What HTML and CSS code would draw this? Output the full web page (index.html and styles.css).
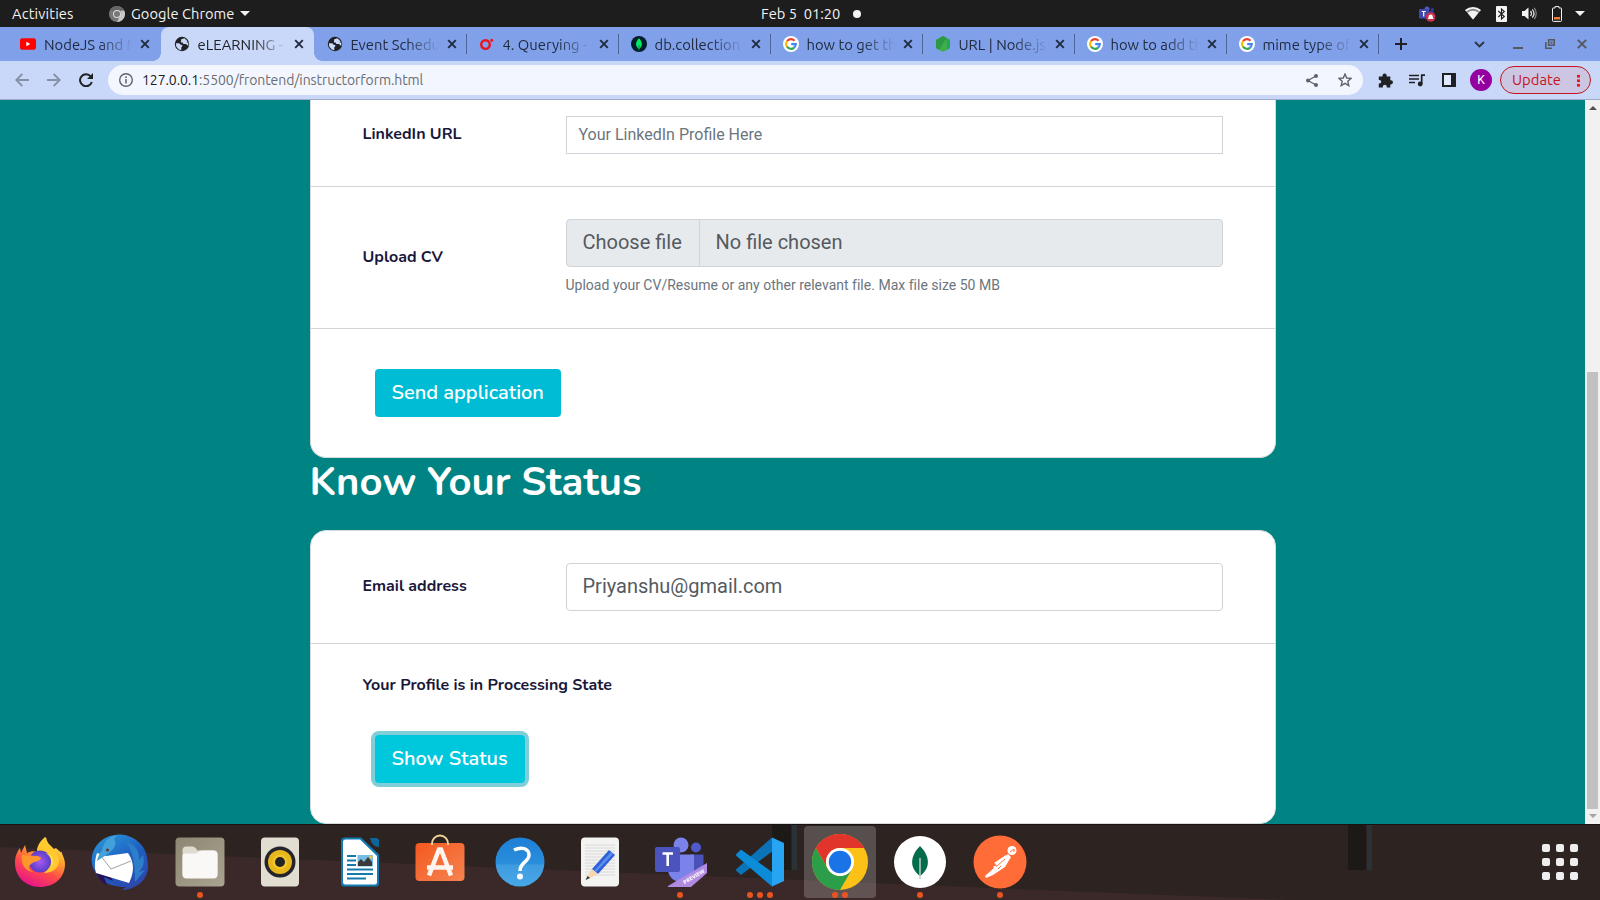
FILE: index.html
```html
<!DOCTYPE html>
<html lang="en">
<head>
<meta charset="utf-8">
<title>eLEARNING</title>
<link rel="stylesheet" href="styles.css">
</head>
<body>
<svg width="0" height="0" class="defs" aria-hidden="true">
  <defs>
    <symbol id="close" viewBox="0 0 10 10"><path d="M1.2 1.2l7.6 7.6M8.8 1.2L1.2 8.8" fill="none" stroke="currentColor" stroke-width="1.9"/></symbol>
    <symbol id="globe" viewBox="0 0 16 16"><circle cx="8" cy="8" r="7.2" fill="#202124"/><path d="M2 7.2h3.2l1.5 1.6 1.6.3v1.2l-1 1v2.9a6 6 0 0 1-5.3-7zM7.2 3.2l3.3-1 3 3.1-1 1.2h1.8v3.4l-2.3-1.8H9.4L8.6 6.6H6.9z" fill="#c9d7f8"/></symbol>
    <symbol id="google" viewBox="0 0 16 16"><circle cx="8" cy="8" r="8" fill="#fff"/><g fill="none" stroke-width="2.1"><path d="M4 5.2A4.8 4.8 0 0 1 11.5 4.7" stroke="#ea4335"/><path d="M4.1 5.1a4.8 4.8 0 0 0 0 5.8" stroke="#fbbc05"/><path d="M4 10.7a4.8 4.8 0 0 0 7.2.9" stroke="#34a853"/><path d="M8.2 8.1h4.6a4.7 4.7 0 0 1-1.6 3.5" stroke="#4285f4"/></g></symbol>
    <linearGradient id="ff" x1=".8" y1="0" x2=".3" y2="1"><stop offset="0" stop-color="#fff44f"/><stop offset=".35" stop-color="#ffa52b"/><stop offset=".65" stop-color="#ff4a4a"/><stop offset="1" stop-color="#e5128e"/></linearGradient>
    <radialGradient id="ffc"><stop offset="0" stop-color="#a65bf2"/><stop offset="1" stop-color="#5a3cc8"/></radialGradient>
    <linearGradient id="tb" x1=".2" y1="0" x2=".8" y2="1"><stop offset="0" stop-color="#2a94d8"/><stop offset=".5" stop-color="#1d5dc0"/><stop offset="1" stop-color="#2f45a8"/></linearGradient>
    <linearGradient id="hp" x1="0" y1="0" x2="0" y2="1"><stop offset="0" stop-color="#1d7fd6"/><stop offset=".54" stop-color="#2b8edb"/><stop offset=".56" stop-color="#3f9be0"/><stop offset="1" stop-color="#46a8e6"/></linearGradient>
    <linearGradient id="sw" x1="0" y1="0" x2="1" y2="1"><stop offset="0" stop-color="#f4581f"/><stop offset="1" stop-color="#f58451"/></linearGradient>
    <linearGradient id="fl" x1="0" y1="0" x2="1" y2="1"><stop offset="0" stop-color="#8c8672"/><stop offset="1" stop-color="#aaa38f"/></linearGradient>
  </defs>
</svg>
<div class="screen">
  <header class="topbar">
    <span class="activities">Activities</span>
    <svg class="app-ico" width="16" height="16" viewBox="0 0 16 16"><circle cx="8" cy="8" r="8" fill="#777"/><path d="M8 0a8 8 0 0 1 7.2 4.5H8a3.6 3.6 0 0 0-3.3 2L1.3 3.7A8 8 0 0 1 8 0z" fill="#666"/><path d="M15.3 4.7A8 8 0 0 1 8 16l3.3-6.2a4 4 0 0 0 0-5z" fill="#c8c8c8"/><circle cx="8" cy="8" r="4" fill="#ddd"/><circle cx="8" cy="8" r="3" fill="#777"/></svg>
    <span class="app-name">Google Chrome</span>
    <i class="caret"></i>
    <div class="clock"><span class="date">Feb 5&nbsp; 01:20</span><i class="dot"></i></div>
    <div class="tray">
      <svg width="17" height="16" viewBox="0 0 17 16"><circle cx="8" cy="3" r="2.5" fill="#5059c9"/><circle cx="13.3" cy="3.8" r="1.7" fill="#343b8c"/><rect x="5" y="5" width="10" height="8" rx="2" fill="#343b8c"/><rect x="0" y="3" width="9.5" height="9.5" rx="1" fill="#4048b0"/><path d="M2.7 5.5h4M4.7 5.5v5" stroke="#fff" stroke-width="1.2"/><circle cx="11.7" cy="11" r="4.8" fill="#cc2f4b"/><path d="M8.7 13q.9-.8.9-2.400a2.100 2.100 0 0 1 4.200 0q0 1.600.9 2.400z" fill="#fff"/></svg>
      <svg class="t-wifi" width="16" height="13" viewBox="0 0 16 13"><path d="M.4 3.6A11.3 11.3 0 0 1 15.6 3.6L8 12.6z" fill="#8b8b8b"/><path d="M2.5 5.7a8.5 8.5 0 0 1 11 0L8 12.4z" fill="#f4f4f4"/><path d="M.6 3.7a11.2 11.2 0 0 1 14.8 0" fill="none" stroke="#f4f4f4" stroke-width="1.8"/></svg>
      <svg class="t-bt" width="11" height="16" viewBox="0 0 11 16"><rect width="11" height="16" rx="1" fill="#f4f4f4"/><path d="M2.3 5l6 5.5L5.500 13V3l2.800 2.500-6 5.500" fill="none" stroke="#1d1d1d" stroke-width="1.1"/></svg>
      <svg class="t-vol" width="15" height="13" viewBox="0 0 15 13"><path d="M0 4h2.500L6.500.4v12.200L2.500 9H0z" fill="#f4f4f4"/><path d="M8.500 4a4 4 0 0 1 0 5M10.300 2.400a6.500 6.500 0 0 1 0 8.200" fill="none" stroke="#ddd" stroke-width="1.3"/><path d="M12.200.8a9 9 0 0 1 0 11.400" fill="none" stroke="#888" stroke-width="1.2"/></svg>
      <svg class="t-bat" width="10" height="16" viewBox="0 0 10 16"><path d="M1 2h2V.6h4V2h2q.5 0 .5.5v12q0 .9-.8.9H1.300q-.8 0-.8-.8v-12Q.5 2 1 2z" fill="none" stroke="#f4f4f4"/><rect x="2" y="11" width="6" height="2.5" fill="#f27835"/></svg>
      <i class="caret"></i>
    </div>
  </header>

  <nav class="tabs">
    <div class="tab first"><svg class="fav" viewBox="0 0 16 16"><rect y="2.3" width="16" height="11.5" rx="2.2" fill="#f00"/><path d="M6.300 5.700v4.600L10.300 8z" fill="#fff"/></svg><span class="t">NodeJS and M</span><svg class="x"><use href="#close"/></svg></div>
    <div class="tab active"><svg class="fav"><use href="#globe"/></svg><span class="t">eLEARNING -</span><svg class="x"><use href="#close"/></svg></div>
    <div class="tab sep"><svg class="fav"><use href="#globe"/></svg><span class="t">Event Schedu</span><svg class="x"><use href="#close"/></svg></div>
    <div class="tab sep"><svg class="fav" viewBox="0 0 16 16"><circle cx="6.5" cy="8.6" r="4.3" fill="none" stroke="#e8141e" stroke-width="2.4"/><circle cx="12.7" cy="4.2" r="1.5" fill="#e8141e"/></svg><span class="t">4. Querying -</span><svg class="x"><use href="#close"/></svg></div>
    <div class="tab sep"><svg class="fav" viewBox="0 0 16 16"><circle cx="8" cy="8" r="8" fill="#001e2b"/><path d="M8 2.300c4 4 3.700 8 0 11-3.700-3-4-7 0-11z" fill="#00ed64"/><path d="M8 9v5.500" stroke="#09804c"/></svg><span class="t">db.collection</span><svg class="x"><use href="#close"/></svg></div>
    <div class="tab sep"><svg class="fav"><use href="#google"/></svg><span class="t">how to get th</span><svg class="x"><use href="#close"/></svg></div>
    <div class="tab sep"><svg class="fav" viewBox="0 0 16 16"><path d="M8 0l7 4v8l-7 4-7-4V4z" fill="#3fae49"/><path d="M8 0L1 4v8l3 1.700L11.500 2z" fill="#2c9a45"/><path d="M11.500 2L15 4v8l-3 1.700z" fill="#1fa954"/></svg><span class="t">URL | Node.js</span><svg class="x"><use href="#close"/></svg></div>
    <div class="tab sep"><svg class="fav"><use href="#google"/></svg><span class="t">how to add th</span><svg class="x"><use href="#close"/></svg></div>
    <div class="tab sep"><svg class="fav"><use href="#google"/></svg><span class="t">mime type of</span><svg class="x"><use href="#close"/></svg></div>
    <svg class="plus" width="12" height="12" viewBox="0 0 12 12"><path d="M6 0v12M0 6h12" stroke="#202124" stroke-width="2"/></svg>
    <div class="winctl">
      <svg width="11" height="7" viewBox="0 0 11 7"><path d="M1 1l4.500 4.500L10 1" fill="none" stroke="#303640" stroke-width="1.9"/></svg>
      <svg width="10" height="10" viewBox="0 0 10 10"><path d="M0 9h10" stroke="#55585f" stroke-width="2"/></svg>
      <svg width="10" height="10" viewBox="0 0 10 10"><path d="M3.700.8h5.500v5.500H3.700zM.8 3v6.200H7" fill="none" stroke="#55585f" stroke-width="1.6"/><rect x="5.5" y="2.6" width="2" height="2" fill="#55585f"/></svg>
      <svg width="10" height="10" viewBox="0 0 10 10"><path d="M.8.8l8.400 8.400M9.200.8L.8 9.200" stroke="#55585f" stroke-width="1.9"/></svg>
    </div>
  </nav>

  <div class="toolbar">
    <svg class="back" width="14" height="14" viewBox="0 0 14 14"><path d="M14 7H1.500M7.300 1L1.300 7l6 6" fill="none" stroke="#8590a8" stroke-width="1.8"/></svg>
    <svg class="fwd" width="14" height="14" viewBox="0 0 14 14"><path d="M0 7h12.500M6.700 1l6 6-6 6" fill="none" stroke="#8590a8" stroke-width="1.8"/></svg>
    <svg class="reload" width="14" height="14" viewBox="0 0 14 14"><path d="M11.800 3.500A6 6 0 1 0 12.800 9" fill="none" stroke="#202124" stroke-width="2"/><path d="M14 0v6H8z" fill="#202124"/></svg>
    <div class="omnibox">
      <svg width="14" height="14" viewBox="0 0 14 14"><circle cx="7" cy="7" r="6.3" fill="none" stroke="#5f6368" stroke-width="1.4"/><path d="M7 6v4.500M7 3.300v1.600" stroke="#5f6368" stroke-width="1.5"/></svg>
      <span class="url"><b>127.0.0.1</b>:5500/frontend/instructorform.html</span>
      <svg class="share" width="12" height="13" viewBox="0 0 12 13"><path d="M10 2L2 6.500l8 4.500" fill="none" stroke="#5f6368" stroke-width="1.3"/><circle cx="10" cy="2" r="2" fill="#5f6368"/><circle cx="2" cy="6.5" r="2" fill="#5f6368"/><circle cx="10" cy="11" r="2" fill="#5f6368"/></svg>
      <svg width="14" height="14" viewBox="0 0 14 14"><path d="M7 1l1.700 4 4.400.4-3.300 2.900 1 4.300L7 10.300l-3.800 2.300 1-4.300L.9 5.400 5.300 5z" fill="none" stroke="#5f6368" stroke-width="1.4"/></svg>
    </div>
    <svg class="ext" width="15" height="15" viewBox="0 0 15 15"><path d="M.8 3.500H4.500V2.600a2.100 2.100 0 0 1 4.200 0v.9h3.600v3.700h.6a2.100 2.100 0 0 1 0 4.200h-.6V14.500H8.800v-.7a2 2 0 0 0-4 0v.7H.8v-4h.7a1.700 1.700 0 0 0 0-3.500H.8z" fill="#202124"/></svg>
    <svg class="media" width="16" height="13" viewBox="0 0 16 13"><path d="M0 1.500h10M0 5h10M0 8.500h6M12.700 10V1.200H16" fill="none" stroke="#202124" stroke-width="1.7"/><circle cx="11.2" cy="10" r="2.4" fill="#202124"/></svg>
    <svg class="side" width="14" height="14" viewBox="0 0 14 14"><path d="M1 1h12v12H1z" fill="#dfe8fc" stroke="#202124" stroke-width="2"/><path d="M9 1h4v12H9z" fill="#202124"/></svg>
    <span class="avatar">K</span>
    <span class="update"><span class="ut">Update</span><i></i></span>
  </div>

  <main class="viewport">
    <div class="page">
      <section class="card card-top">
        <div class="row r-link"><label>LinkedIn URL</label><div class="field"><div class="input">Your LinkedIn Profile Here</div></div></div>
        <div class="row r-file"><label>Upload CV</label><div class="field"><div class="input lg file"><span class="choose">Choose file</span><span>No file chosen</span></div><div class="hint">Upload your CV/Resume or any other relevant file. Max file size 50 MB</div></div></div>
        <div class="r-send"><span class="btn send">Send application</span></div>
      </section>
      <h1>Know Your Status</h1>
      <section class="card card-status">
        <div class="row r-mail"><label>Email address</label><div class="field"><div class="input lg mail">Priyanshu@gmail.com</div></div></div>
        <div class="r-status"><p>Your Profile is in Processing State</p><span class="btn focus">Show Status</span></div>
      </section>
    </div>
    <div class="scroll"><i class="up"></i><div class="thumb"></div><i class="down"></i></div>
  </main>

  <footer class="dock">
    <svg class="wall" viewBox="0 0 1600 76" preserveAspectRatio="none"><rect width="1600" height="76" fill="#2d2321"/><path d="M0 23L1140 70 1290 76H0z" fill="#3b2929"/><path d="M772 0h19v46h-19zM1348 0h18v46h-18z" fill="#1c1917"/><path d="M792 0h5v46h-5zM1367 0h5v46h-5z" fill="#2b3134"/><path d="M0 .5h1600" stroke="#181313"/></svg>
    <div class="cell"><svg width="56" height="56" viewBox="0 0 56 56"><path d="M28 53C13 53 3 42 3 29c0-7 2-11 5-15l1 5 4-8 2 8c4-2 7-2 10-1 1-6 3-9 9-15 1 6 3 7 8 12l2-1c3 3 5 5 6 4-1 1 3 6 3 12 0 14-11 23-25 23z" fill="url(#ff)"/><path d="M33 3c-7 6-8 11-8 15 6 0 11 4 12 9 1 6-1 9-5 12 9 0 15-5 15-13 0-8-12-12-14-23z" fill="#ffc92f"/><circle cx="28" cy="27.5" r="11" fill="url(#ffc)"/><path d="M10 21l15 1c1 0 4 1 4 2-1 4-8 3-11 7-3 3 1 6 4 7-9 0-14-9-12-17z" fill="#ff962d"/><path d="M33 19c5 2 8 7 6 14 4-5 3-12-6-14z" fill="#ffde55"/></svg></div>
    <div class="cell"><svg width="58" height="58" viewBox="0 0 58 58"><path d="M22 3C31-1 45 4 52 14c4 6 5 14 5 21-1 10-8 17-14 19-3 2-8 3-12 3l4-3c-17 0-31-7-34-23C-1 18 8 4 24 2z" fill="url(#tb)"/><path d="M3 37c4 7 7 12 13 15l-3-8 9 4-8-15z" fill="#26105a"/><path d="M6 20l9 3L37 20c7 10 6 20 1 30L5 40c-2-6-1-14 1-20z" fill="#fff"/><path d="M9 22l11 14 20-8" fill="none" stroke="#888" stroke-width=".8"/><path d="M11 17C13 7 20 3 26 2l-3 4c5 8-4 14-17 22 1-5 3-8 5-11z" fill="#42a0da"/><path d="M35 9c9 2 14 9 13 18l4-5c2 8 0 13-4 17l6-2-10 12C44 31 42 18 35 9z" fill="#2e7dc9"/><circle cx="16.5" cy="17" r="1.6" fill="#593c35"/></svg></div>
    <div class="cell"><svg width="50" height="50" viewBox="0 0 50 50"><rect x=".5" y=".5" width="49" height="49" rx="4" fill="url(#fl)"/><path d="M7.500 13q0-3.500 4-3.500h6q2 0 3 1.500l2 2.500h16q4 0 4 4V37q0 4-4 4H11.500q-4 0-4-4z" fill="#dfdbd1"/><path d="M7.500 19q0-2.500 3-2.500h9q2 0 3.500-1.500t4-1.500h11.500q4 0 4 4v20q0 4-4 4h-27q-4 0-4-4z" fill="#f9f8f7"/></svg><i class="run"><b></b></i></div>
    <div class="cell"><svg width="40" height="50" viewBox="0 0 40 50"><rect x="1" y=".5" width="38" height="49" rx="4" fill="#e2ddd1"/><circle cx="20" cy="25" r="15.5" fill="#24242c"/><circle cx="20" cy="25" r="12" fill="#e7b61b"/><circle cx="20" cy="25" r="7.5" fill="#f2c62b"/><circle cx="20" cy="25" r="5" fill="#242424"/></svg></div>
    <div class="cell"><svg width="40" height="50" viewBox="0 0 40 50"><path d="M5 .5h16l18 17V46q0 3.500-3.500 3.500h-31Q1 49.500 1 46V4Q1 .5 5 .5z" fill="#137bb4"/><path d="M3 5q0-2.500 2.500-2.500H20L37 19v26q0 2.500-2.500 2.500h-29Q3 47.500 3 45z" fill="#fff"/><path d="M30 1h6q3 0 3 3v6q-7 0-9-9z" fill="#0c659c"/><path d="M7 19h9M7 23.500h9M7 28h9M7 32.500h26M7 37h26M7 41.500h19" stroke="#1679ad" stroke-width="2"/><rect x="17.5" y="18" width="15.5" height="11.5" fill="#75bde4"/><path d="M18 29v-4l3-3 3 3 4-5 4 5v4z" fill="#3a3a3a"/><circle cx="31" cy="20" r="1.5" fill="#f4c82e"/></svg></div>
    <div class="cell"><svg width="50" height="56" viewBox="0 0 50 56"><rect x=".5" y="9" width="49" height="38" rx="4" fill="url(#sw)"/><path d="M17 11V9.500a8 8 0 0 1 16 0V11" fill="none" stroke="#f2d29b" stroke-width="2"/><path d="M14 41.500l10-26h2l10 26M12 33.500h26" fill="none" stroke="#fff4ee" stroke-width="4.5"/></svg></div>
    <div class="cell"><svg width="50" height="50" viewBox="0 0 50 50"><circle cx="25" cy="25" r="24.5" fill="url(#hp)"/><path d="M19 13c7-3.500 15-2 15 5 0 7-9 7-9 16" fill="none" stroke="#fff" stroke-width="3.5"/><circle cx="25" cy="39.5" r="3" fill="#fff"/></svg></div>
    <div class="cell"><svg width="40" height="50" viewBox="0 0 40 50"><rect x="1" y=".5" width="38" height="49" rx="4" fill="#f3f3f2"/><path d="M5 8h30M5 11h30M5 14h30M5 17h30M5 20h30M5 23h30M5 26h30M5 29h30M5 32h30M5 35h30M5 38h30" stroke="#d8d8d8"/><path d="M29 13l6 5-17 19-6-5z" fill="#2f62d9"/><path d="M31 15l2 2-17 18-2-1z" fill="#5f8df0"/><path d="M11.500 32l6.500 5-12 6z" fill="#f6d6ad"/><path d="M7.500 39L10 41l-4.500 2z" fill="#333"/></svg></div>
    <div class="cell"><svg width="54" height="52" viewBox="0 0 54 52"><circle cx="28" cy="9" r="7.5" fill="#7b83eb"/><circle cx="43" cy="11.5" r="5" fill="#5059c9"/><path d="M38 18.500h12.500V34q-1 9-11 9z" fill="#4a52b8"/><path d="M15 18.500h26V32a13 13 0 0 1-26 2z" fill="#7b83eb"/><rect x="2" y="11" width="25" height="25" rx="2" fill="#4b53bc"/><path d="M9.500 17.500h10.500M14.700 17.500V30" stroke="#fff" stroke-width="2.6"/><path d="M15 50L54 27v10L38 51H15z" fill="#b18ae2"/><text x="31.500" y="48.500" transform="rotate(-31 31.500 48.500)" font-size="5.500" class="pv">PREVIEW</text></svg><i class="run"><b></b></i></div>
    <div class="cell"><svg width="50" height="50" viewBox="0 0 50 50"><path d="M6 38L1.500 34q-1-1 0-2L37 .5v14z" fill="#0b74b8"/><path d="M6 12.500L1.500 17q-1 1 0 2L37 49.500V35z" fill="#0c8bd8"/><path d="M37 .5l12 5.500V44L37 49.500z" fill="#27a4f2"/></svg><i class="run"><b></b><b></b><b></b></i></div>
    <div class="cell on"><svg width="56" height="56" viewBox="0 0 56 56"><circle cx="28" cy="28" r="28" fill="#fbc116"/><path d="M3.750 14A28 28 0 0 1 52.300 14H28A14 14 0 0 0 15.900 35z" fill="#e1352b"/><path d="M3.750 14A28 28 0 0 0 28 56L40.100 35A14 14 0 0 1 15.900 35z" fill="#2c9d49"/><circle cx="28" cy="28" r="14" fill="#fff"/><circle cx="28" cy="28" r="11.2" fill="#1b73e8"/></svg><i class="run"><b></b><b></b></i></div>
    <div class="cell"><svg width="52" height="52" viewBox="0 0 52 52"><circle cx="26" cy="26" r="26" fill="#fff"/><path d="M26 10c10 10 11 22 0 30-11-8-10-20 0-30z" fill="#046b4c"/><path d="M26 22v21" stroke="#b8d0c3" stroke-width="1.5"/></svg><i class="run"><b></b></i></div>
    <div class="cell"><svg width="54" height="54" viewBox="0 0 54 54"><circle cx="27" cy="27" r="26.5" fill="#ff6c37"/><circle cx="39" cy="15.5" r="4.5" fill="#fff"/><path d="M35 19l3 3-6 10-12 8-7 3-1-2 9-8-1-1z" fill="#fff"/><path d="M21 28l12-8 2 2-10 8z" fill="#fff"/><path d="M20 30l4 1 8-7M37 17l4-3v3M25 34l3-3" fill="none" stroke="#ff6c37"/></svg><i class="run"><b></b></i></div>
    <div class="apps"><i></i><i></i><i></i><i></i><i></i><i></i><i></i><i></i><i></i></div>
  </footer>
</div>
</body>
</html>
```
FILE: styles.css
```css
* { box-sizing: border-box; }
body { margin: 0; font-family: Ubuntu, "Noto Sans", sans-serif; }
svg { display: block; flex: none; }
.defs { position: absolute; }
.screen { width: 1600px; height: 900px; display: flex; flex-direction: column; overflow: hidden; }

/* desktop bar */
.topbar { position: relative; height: 27px; flex: none; background: #1d1d1d; color: #f2f2f2; display: flex; align-items: center; font-size: 14.667px; white-space: nowrap; }
.activities { margin-left: 12px; width: 97px; letter-spacing: .15px; }
.app-name { margin-left: 6px; width: 104px; letter-spacing: .05px; }
.caret { border: 5px solid transparent; border-top-color: #f2f2f2; border-bottom: 0; margin-left: 5px; }
.clock { margin-left: 511px; display: flex; align-items: center; }
.date { width: 92px; }
.dot { width: 8px; height: 8px; border-radius: 50%; background: #f4f4f4; }
.tray { display: flex; align-items: center; margin-left: auto; padding-right: 15px; }
.t-wifi { margin-left: 29px; }
.t-bt { margin-left: 15px; }
.t-vol { margin-left: 15px; }
.t-bat { margin-left: 15px; }
.tray .caret { margin-left: 13px; }

/* browser tabs */
.tabs { height: 34px; flex: none; background: #80a0ea; display: flex; align-items: center; padding-left: 8px; color: #202b40; }
.tab { position: relative; width: 152px; height: 34px; flex: none; display: flex; align-items: center; padding-left: 12.5px; }
.first, .active { width: 153px; }
.first { padding-left: 12px; }
.fav { width: 16px; height: 16px; }
.t { margin-left: 8px; width: 89px; overflow: hidden; white-space: nowrap; font-size: 14.8px; -webkit-mask-image: linear-gradient(90deg, #000 62%, transparent 100%); mask-image: linear-gradient(90deg, #000 62%, transparent 100%); }
.x { width: 10px; height: 10px; margin-left: 7px; color: #202b40; }
.active { background: #c9d7f8; border-radius: 8px 8px 0 0; color: #202124; }
.active::before, .active::after { content: ""; position: absolute; bottom: 0; width: 8px; height: 8px; }
.active::before { left: -8px; background: radial-gradient(circle at 0 0, #80a0ea 7.5px, #c9d7f8 8px); }
.active::after { right: -8px; background: radial-gradient(circle at 100% 0, #80a0ea 7.5px, #c9d7f8 8px); }
.sep::after { content: ""; position: absolute; right: -1px; top: 7px; width: 1px; height: 20px; background: #4f6698; }
.plus { margin-left: 17px; }
.winctl { margin-left: auto; padding-right: 13px; display: flex; align-items: center; gap: 22px; }
.winctl svg:first-child { margin-right: 6px; }

/* address bar */
.toolbar { height: 39px; flex: none; background: #c9d7f8; border-bottom: 1px solid #a0aac6; display: flex; align-items: center; padding-left: 15px; }
.fwd, .reload { margin-left: 18px; }
.omnibox { margin-left: 15px; width: 1255px; height: 30px; border-radius: 15px; background: #f3f6fe; display: flex; align-items: center; padding: 0 11px; }
.url { margin-left: 9px; font-size: 14px; color: #6a6d72; white-space: nowrap; letter-spacing: -.08px; }
.url b { font-weight: 400; color: #202124; }
.share { margin-left: auto; margin-right: 20px; }
.ext { margin-left: 15px; }
.media { margin-left: 16px; }
.side { margin-left: 17px; }
.avatar { margin-left: 14px; width: 22px; height: 22px; border-radius: 50%; background: #9400a0; color: #fff; font: 12px/22px Roboto, sans-serif; text-align: center; }
.update { margin-left: 8px; width: 91px; height: 28px; border: 1px solid #c5141b; border-radius: 14px; background: #cdc6e3; display: flex; align-items: center; padding-left: 11px; }
.ut { width: 65px; font-size: 14.8px; margin-top: -1px; color: #c5141b; }
.update i { width: 3px; height: 13px; background: radial-gradient(circle, #f0141b 1.5px, transparent 1.7px) 0 0 / 3px 4.5px; }

/* web page */
.viewport { height: 724px; flex: none; background: #008383; display: flex; overflow: hidden; font-family: Roboto, sans-serif; }
.page { width: 1585px; padding-left: 310px; }
.card { width: 966px; background: #fff; border: 1px solid #d5dbdc; }
.card-top { height: 358px; border-top: 0; border-radius: 0 0 16px 16px; }
.card-status { height: 294px; border-radius: 16px; }
.row { display: flex; align-items: center; padding: 0 52px; border-bottom: 1px solid #d2d4d6; }
label, .r-status p { font: 700 16px/24px Nunito, Lato, sans-serif; color: #19173a; white-space: nowrap; }
label { width: 203.5px; margin-left: -.5px; padding-bottom: 2px; flex: none; }
.field { flex: 1; }
.r-link { height: 87px; padding-bottom: 17px; }
.r-file { height: 142px; }
.r-mail { height: 113px; }
.input { height: 38px; border: 1px solid #ced4da; background: #fff; color: #6c757d; font-size: 16px; line-height: 36px; padding-left: 11.5px; white-space: nowrap; }
.lg { height: 48px; border-radius: 4px; font-size: 20px; line-height: 45px; color: #555a60; padding-left: 15.5px; }
.file { background: #e7eaed; display: flex; }
.choose { width: 117.5px; border-right: 1px solid #ced4da; margin-right: 15.5px; height: 46px; }
.hint { font-size: 14px; line-height: 21px; color: #6c757d; margin: 8px 0 0 -.5px; letter-spacing: .01px; }
.r-send { padding: 40px 0 0 64px; }
.btn { display: block; width: 186px; height: 48px; border-radius: 4px; background: #00bcd4; color: #fff; font: 600 20px/48px Nunito, Lato, sans-serif; padding-left: 16.5px; white-space: nowrap; }
h1 { margin: 0 0 0 -.5px; height: 72px; font: 700 40px/48px Nunito, Lato, sans-serif; color: #fff; }
.r-status { padding: 29px 51.5px 0; }
.r-status p { margin: 0 0 38px; }
.focus { width: 150px; margin-left: 12.5px; background: #00c8dc; box-shadow: 0 0 0 4px #80ced7; }
.scroll { width: 15px; background: #f1f1f1; display: flex; flex-direction: column; align-items: center; }
.up, .down { border: 4px solid transparent; }
.up { border-bottom-color: #505050; border-top: 0; margin-top: 6px; }
.thumb { width: 11px; height: 437px; background: #c1c1c1; margin-top: 262px; }
.down { border-top-color: #a3a3a3; border-bottom: 0; margin-top: 5px; }

/* launcher */
.dock { position: relative; height: 76px; flex: none; display: flex; gap: 8px; padding: 2px 0 2px 4px; }
.wall { position: absolute; inset: 0; width: 1600px; height: 76px; }
.cell { position: relative; width: 72px; height: 72px; display: flex; align-items: center; justify-content: center; border-radius: 4px; }
.on { background: rgba(255, 255, 255, .2); }
.run { position: absolute; left: 0; right: 0; bottom: 0; display: flex; justify-content: center; gap: 4px; }
.run b { width: 6px; height: 6px; border-radius: 50%; background: #e95420; }
.pv { fill: #fff; font-family: "Open Sans", sans-serif; font-weight: 700; }
.apps { position: relative; margin: 18px 22px 0 auto; display: grid; grid-template-columns: repeat(3, 8px); grid-auto-rows: 8px; gap: 6px; }
.apps i { background: #eee; border-radius: 2px; }
```
